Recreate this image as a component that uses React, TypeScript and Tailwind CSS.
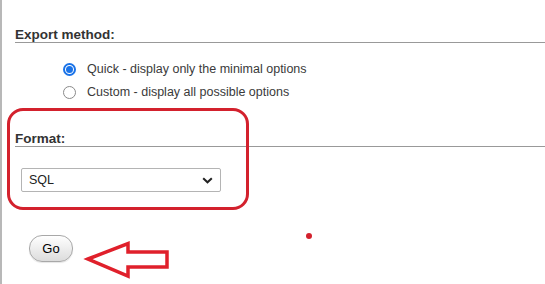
import React from "react";

export default function App() {
  const font = { fontFamily: '"Liberation Sans", Arial, sans-serif' };
  return (
    <div
      className="relative w-[545px] h-[284px] bg-white border-l-2 border-[#b8b8b8] overflow-hidden"
      style={font}
    >
      <div className="pl-[13px]">
        <h2 className="mt-[27px] text-[13.5px] leading-[15px] font-bold text-[#333] border-b border-[#999]">
          Export method:
        </h2>
        <div className="mt-[15px] ml-[48px] flex flex-col">
          <label className="flex items-center h-[23px] text-[12.5px] text-[#3a3a3a]">
            <span className="w-[13px] h-[13px] rounded-full border-[2px] border-[#1a73e8] flex items-center justify-center bg-white">
              <span className="w-[7px] h-[7px] rounded-full bg-[#1a73e8]" />
            </span>
            <span className="ml-[11px]">Quick - display only the minimal options</span>
          </label>
          <label className="flex items-center h-[23px] text-[12.5px] text-[#3a3a3a]">
            <span className="w-[13px] h-[13px] rounded-full border border-[#8a8a8a] bg-white" />
            <span className="ml-[11px]">Custom - display all possible options</span>
          </label>
        </div>
        <h2 className="mt-[27px] text-[13.5px] leading-[15px] font-bold text-[#333] border-b border-[#999]">
          Format:
        </h2>
        <div className="mt-[21px] ml-[6px] w-[200px] h-[24px] border border-[#b4b4b4] rounded-[2px] flex items-center justify-between pl-[7px] pr-[7px] text-[12.5px] text-[#222] bg-white">
          <span>SQL</span>
          <svg width="11" height="7" viewBox="0 0 11 7">
            <path d="M1.2 1.2 L5.5 5.3 L9.8 1.2" fill="none" stroke="#222" strokeWidth="2" />
          </svg>
        </div>
        <button className="mt-[43px] ml-[14px] w-[44px] h-[27px] rounded-[13px] border border-[#a8a8a8] bg-gradient-to-b from-white to-[#dcdcdc] text-[13px] text-black flex items-center justify-center shadow-[0_1px_1px_rgba(0,0,0,0.1)]">
          Go
        </button>
      </div>

      <div className="absolute left-[5px] top-[108px] w-[242px] h-[102px] border-[3.5px] border-[#d3212d] rounded-[16px]" />
      <svg className="absolute left-0 top-0" width="545" height="284">
        <polygon
          points="86,259 126,243.5 126,252 165,252 165,267 126,267 126,276"
          fill="none"
          stroke="#e0202b"
          strokeWidth="3.5"
          strokeLinejoin="miter"
        />
        <circle cx="307" cy="236" r="3" fill="#d3212d" />
      </svg>
    </div>
  );
}
